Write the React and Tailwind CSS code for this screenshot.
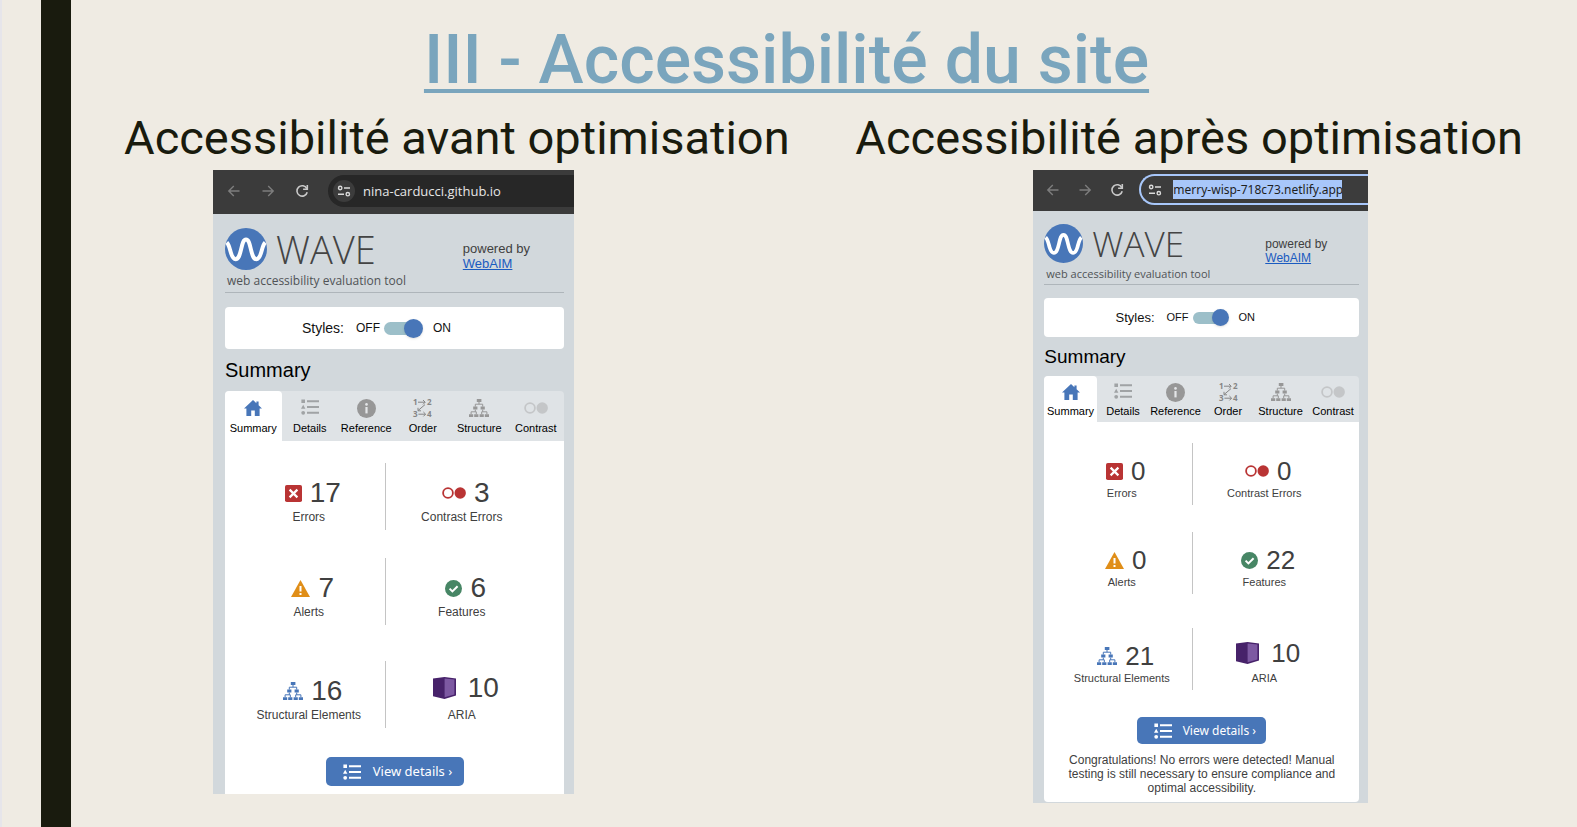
import React from "react";

const large = {
  panel: "w-[361px] ml-[89px]",
  bar: "h-11 pl-3 pb-[2px]",
  navBtn: "w-[18px] mr-4",
  pill: "h-8 ml-px bg-[#272727] pl-[5px] gap-2",
  siteInfo: "size-[22px] bg-[#3c3c3c]",
  url: "w-[180px] text-[13px] text-[#e6e6e6] h-5 font-['Open_Sans',sans-serif]",
  inset: "pl-3 pr-[10px]",
  header: "pt-[14px]",
  logo: "size-[42px]",
  word: "text-[38px] leading-[42px]",
  tagline: "text-[12px] leading-[22px]",
  powered: "text-[13px] leading-[15px] pt-[13px] mr-[34px]",
  styles: "mt-[14px] h-[42px] pr-[36px]",
  stylesLabel: "text-[14px] mr-3",
  onOff: "text-[12px]",
  track: "w-[39px] h-[19px]",
  rail: "h-[13px] w-[34px]",
  knob: "size-[19px]",
  heading: "text-[20px] leading-[42px]",
  tab: "h-[50px] pt-[7px] gap-[3px]",
  body: "pt-[22px] pb-2",
  stats: "pl-2 pr-[26px]",
  rowGaps: ["mt-0", "mt-7", "mt-9"],
  row: "h-[67px]",
  cell: "pt-4 gap-[3px]",
  cellRaised: "pt-[13px] gap-[6px]",
  number: "text-[28px] leading-[28px] pl-2",
  label: "text-[12px] leading-[15px]",
  button: "mt-[29px] h-[29px] w-[138px] text-[13px] gap-3",
  card: "",
};

const small = {
  panel: "w-[335px] ml-[178px] pb-px",
  bar: "h-[41px] pl-[11px] pb-[2px]",
  navBtn: "w-[18px] mr-[14px]",
  pill: "h-[31px] -ml-px border-2 border-r-0 border-[#a8c7fa] bg-[#3c3c3c] pl-[3px] gap-[7px]",
  siteInfo: "size-[22px]",
  url: "w-[169px] text-[12px] text-[#1f1f1f] bg-[#a8c7fa] h-[19px] font-['Noto_Sans',sans-serif]",
  inset: "pl-[11px] pr-[9px]",
  header: "pt-[13px]",
  logo: "size-[39px]",
  word: "text-[35px] leading-[39px]",
  tagline: "text-[11px] leading-[21px]",
  powered: "text-[12px] leading-[14px] pt-[13px] mr-8",
  styles: "mt-[13px] h-[39px] pr-[33px]",
  stylesLabel: "text-[13px] mr-3",
  onOff: "text-[11px]",
  track: "w-[36px] h-[17px]",
  rail: "h-[12px] w-[32px]",
  knob: "size-[17px]",
  heading: "text-[19px] leading-[39px]",
  tab: "h-[46px] pt-[6px] gap-[2px]",
  body: "pt-[21px] pb-[7px]",
  stats: "pl-[7px] pr-6",
  rowGaps: ["mt-0", "mt-[27px]", "mt-[34px]"],
  row: "h-[62px]",
  cell: "pt-[15px] gap-[2px]",
  cellRaised: "pt-[12px] gap-[5px]",
  number: "text-[26px] leading-[26px] pl-2",
  label: "text-[11px] leading-[14px]",
  button: "mt-[27px] h-[27px] w-[129px] text-[12px] gap-[11px]",
  card: "rounded-b",
};

function ArrowIcon({ flip }) {
  return (
    <svg viewBox="0 0 14 14" className="size-[14px]" fill="none" stroke="#7d7d7d" strokeWidth="1.4" aria-hidden="true">
      {flip ? <path d="M1.5 7H12M7.2 2l5 5-5 5" /> : <path d="M12.5 7H2M6.8 2l-5 5 5 5" />}
    </svg>
  );
}

function ReloadIcon() {
  return (
    <svg viewBox="0 0 14 14" className="size-[14px]" fill="none" stroke="#c9c9c9" strokeWidth="1.6" aria-hidden="true">
      <path d="M11.8 4.6A5.2 5.2 0 1 0 12.2 8.2" />
      <path d="M12.3 1v4.2H8.1" />
    </svg>
  );
}

function TuneIcon() {
  return (
    <svg viewBox="0 0 14 14" className="size-[14px]" fill="none" stroke="#dadada" strokeWidth="1.4" aria-hidden="true">
      <circle cx="3.2" cy="4" r="1.7" />
      <path d="M7 4h6M1 10.2h6" />
      <circle cx="10.8" cy="10.2" r="1.7" />
    </svg>
  );
}

function WaveLogo({ className }) {
  return (
    <svg viewBox="0 0 42 42" className={className} aria-hidden="true">
      <circle cx="21" cy="21" r="21" fill="#4876b8" />
      <path
        d="M1.8 14.5C4 16.5 4.6 20.5 6 25C7.4 29.5 8.4 31.2 10.6 31.2C13.6 31.2 14.8 26.8 16.1 21.4C17.4 16 18.2 11.6 21 11.6C23.8 11.6 24.6 16 25.9 21.4C27.2 26.8 28.4 31.2 31.4 31.2C33.6 31.2 34.6 29.5 36 25C37.4 20.5 38 16.5 40.2 14.5"
        fill="none"
        stroke="#fff"
        strokeWidth="4"
        strokeLinecap="butt"
      />
    </svg>
  );
}

function HomeIcon() {
  return (
    <svg viewBox="0 0 18 16" className="h-4 w-[18px]" fill="#4876b8" aria-hidden="true">
      <path d="M9 0L0 8.6h2.4V16h4.8v-5.4h3.6V16h4.8V8.6H18L14.6 5.3V1.4h-2.2v1.8z" />
    </svg>
  );
}

function ListIcon({ color, faint }) {
  return (
    <svg viewBox="0 0 18 16" className={faint ? "mb-[2px] h-4 w-[18px]" : "h-4 w-[18px]"} fill={color} aria-hidden="true">
      <path d="M.4.4h3.6V4H.4zM2.2 5.8L4.4 9.8H0z" />
      <circle cx="2.2" cy="13.8" r="1.9" />
      <path d="M6 1.2h12v2H6zM6 7h12v2H6zM6 12.8h12v2H6z" />
    </svg>
  );
}

function InfoIcon() {
  return (
    <svg viewBox="0 0 19 19" className="size-[19px]" aria-hidden="true">
      <circle cx="9.5" cy="9.5" r="9.5" fill="#979797" />
      <circle cx="9.5" cy="5.4" r="1.3" fill="#e4e6e8" />
      <path d="M8.4 8h2.2v6.4H8.4z" fill="#e4e6e8" />
    </svg>
  );
}

function OrderIcon() {
  return (
    <svg viewBox="0 0 19 20" className="h-5 w-[19px] overflow-visible" fill="#858585" aria-hidden="true">
      <g fontFamily="'Open Sans', sans-serif" fontWeight="700" fontSize="8">
        <text x="0" y="7">1</text>
        <text x="14" y="7">2</text>
        <text x="0" y="19">3</text>
        <text x="14" y="19">4</text>
      </g>
      <path
        d="M5 4.2h7M10 2l2.2 2.2L10 6.4M12 6.6L5 12.6M5 9.8v3h3M5.4 16.2h7M10.4 14l2.2 2.2-2.2 2.2"
        fill="none"
        stroke="#858585"
        strokeWidth="1"
      />
    </svg>
  );
}

function TreeIcon({ color }) {
  return (
    <svg viewBox="0 0 20 18" className="h-[18px] w-5" fill={color} aria-hidden="true">
      <path d="M7.8 0h4.6v3H7.8zM4.2 7.6h4.2v3H4.2zM11.6 7.6h4.2v3h-4.2zM0 15.2h4.2V18H0zM5.2 15.2h4.2V18H5.2zM10.6 15.2h4.2V18h-4.2zM15.8 15.2H20V18h-4.2z" />
      <path
        d="M10 3v2.2M6.3 7.6V5.2h7.4v2.4M6.3 10.6v2.2M2.1 15.2v-2.4h5.2v2.4M13.7 10.6v2.2M12.7 15.2v-2.4h5.2v2.4"
        fill="none"
        stroke={color}
        strokeWidth="1"
      />
    </svg>
  );
}

function ContrastIcon({ color }) {
  return (
    <svg viewBox="0 0 24 12" className="h-3 w-6" aria-hidden="true">
      <circle cx="6" cy="6" r="4.9" fill="none" stroke={color} strokeWidth="1.8" />
      <circle cx="18.2" cy="6" r="5.7" fill={color} />
    </svg>
  );
}

function ErrorIcon() {
  return (
    <svg viewBox="0 0 17 17" className="size-[17px]" aria-hidden="true">
      <rect width="17" height="17" rx="1.8" fill="#b93434" />
      <path d="M4.6 4.6l7.8 7.8M12.4 4.6l-7.8 7.8" stroke="#fff" strokeWidth="2.2" />
    </svg>
  );
}

function AlertIcon() {
  return (
    <svg viewBox="0 0 19 17" className="h-[17px] w-[19px]" aria-hidden="true">
      <path d="M9.5 0L19 17H0z" fill="#e08e18" />
      <path d="M8.5 6h2v5.6h-2zM8.5 13h2v2h-2z" fill="#fff" />
    </svg>
  );
}

function CheckIcon() {
  return (
    <svg viewBox="0 0 17 17" className="size-[17px]" aria-hidden="true">
      <circle cx="8.5" cy="8.5" r="8.5" fill="#478665" />
      <path d="M4.6 8.6l2.8 2.8 5.2-5.2" fill="none" stroke="#fff" strokeWidth="2" />
    </svg>
  );
}

function CubeIcon() {
  return (
    <svg viewBox="0 0 23 22" className="mr-1 h-[22px] w-[23px]" aria-hidden="true">
      <path d="M0 1.4L11.5 0L23 1.4V18.6L11.5 22L0 19.2z" fill="#47226a" />
      <path d="M11.6 1.4L21.4 2.6v14.8L11.6 20.2z" fill="#7d59a2" />
    </svg>
  );
}

const tabs = [
  { name: "Summary", icon: <HomeIcon /> },
  { name: "Details", icon: <ListIcon color="#a0a3a5" faint /> },
  { name: "Reference", icon: <InfoIcon /> },
  { name: "Order", icon: <OrderIcon /> },
  { name: "Structure", icon: <TreeIcon color="#979797" /> },
  { name: "Contrast", icon: <ContrastIcon color="#c4c6c8" /> },
];

const statRows = [
  [
    { key: "errors", label: "Errors", icon: <ErrorIcon /> },
    { key: "contrast", label: "Contrast Errors", icon: <ContrastIcon color="#b93434" /> },
  ],
  [
    { key: "alerts", label: "Alerts", icon: <AlertIcon /> },
    { key: "features", label: "Features", icon: <CheckIcon /> },
  ],
  [
    { key: "structure", label: "Structural Elements", icon: <TreeIcon color="#4876b8" /> },
    { key: "aria", label: "ARIA", icon: <CubeIcon />, raised: true },
  ],
];

function BrowserBar({ s, url }) {
  const nav = `flex shrink-0 justify-center ${s.navBtn}`;
  return (
    <div className={`flex items-center bg-[#3b3b3b] ${s.bar}`}>
      <button type="button" aria-label="Précédent" className={nav}><ArrowIcon /></button>
      <button type="button" aria-label="Suivant" className={nav}><ArrowIcon flip /></button>
      <button type="button" aria-label="Actualiser" className={nav}><ReloadIcon /></button>
      <div className={`flex min-w-0 flex-1 items-center rounded-l-full ${s.pill}`}>
        <span className={`flex shrink-0 items-center justify-center rounded-full ${s.siteInfo}`}>
          <TuneIcon />
        </span>
        <input
          type="text"
          aria-label="Adresse du site"
          defaultValue={url}
          className={`outline-none ${s.url}`}
        />
      </div>
    </div>
  );
}

function WavePanel({ s, url, values, message }) {
  return (
    <article className={`overflow-hidden bg-[#d2d8dc] ${s.panel}`}>
      <BrowserBar s={s} url={url} />
      <div className={s.inset}>
        <header className={`flex items-start justify-between border-b border-[#aeb5ba] ${s.header}`}>
          <div>
            <div className="flex items-center gap-[9px]">
              <WaveLogo className={s.logo} />
              <span className={`font-['Open_Sans',sans-serif] font-light text-[#444] ${s.word}`}>WAVE</span>
            </div>
            <p className={`pl-[2px] font-['Open_Sans',sans-serif] text-[#505356] ${s.tagline}`}>
              web accessibility evaluation tool
            </p>
          </div>
          <p className={`text-[#404040] ${s.powered}`}>
            powered by
            <br />
            <a href="#webaim" className="text-[#1a5bc0] underline">WebAIM</a>
          </p>
        </header>

        <div className={`flex items-center justify-center rounded bg-white text-[#111] ${s.styles}`}>
          <span className={s.stylesLabel}>Styles:</span>
          <label className={`flex items-center ${s.onOff}`}>
            OFF
            <span className={`relative ml-1 mr-[10px] flex items-center ${s.track}`}>
              <input type="checkbox" role="switch" aria-label="Styles" defaultChecked className="peer sr-only" />
              <span className={`rounded-full bg-[#9cbfc9] ${s.rail}`} />
              <span className={`absolute right-0 rounded-full bg-[#4876b8] shadow ${s.knob}`} />
            </span>
            ON
          </label>
        </div>

        <h3 className={`text-black ${s.heading}`}>Summary</h3>

        <div role="tablist" className="grid grid-cols-6 rounded-t bg-[#dfe3e6]">
          {tabs.map((tab, i) => (
            <button
              key={tab.name}
              type="button"
              role="tab"
              aria-selected={i === 0}
              className={`flex flex-col items-center rounded-t text-black ${i === 0 ? "bg-white" : ""} ${s.tab}`}
            >
              <span className="flex h-5 items-center">{tab.icon}</span>
              <span className="text-[11px] leading-[14px]">{tab.name}</span>
            </button>
          ))}
        </div>

        <div className={`bg-white ${s.body} ${s.card}`}>
          <div className={s.stats}>
            {statRows.map((row, r) => (
              <div key={r} className={`grid grid-cols-2 ${s.row} ${s.rowGaps[r]}`}>
                {row.map((stat, c) => (
                  <div
                    key={stat.key}
                    className={`flex flex-col items-center text-[#404040] ${c === 0 ? "border-r border-[#c4c4c4]" : ""} ${
                      stat.raised ? s.cellRaised : s.cell
                    }`}
                  >
                    <div className={`flex items-center gap-2 ${s.number}`}>
                      {stat.icon}
                      <span>{values[stat.key]}</span>
                    </div>
                    <div className={`whitespace-nowrap ${s.label}`}>{stat.label}</div>
                  </div>
                ))}
              </div>
            ))}
          </div>
          <button
            type="button"
            className={`mx-auto flex items-center justify-center rounded-[5px] bg-[#4876b8] pl-[6px] font-['Noto_Sans',sans-serif] text-white ${s.button}`}
          >
            <ListIcon color="#fff" />
            <span className="whitespace-nowrap">View details ›</span>
          </button>
          {message && (
            <p className="mx-auto mt-[9px] max-w-[278px] text-center text-[12px] leading-[14px] text-[#404040]">{message}</p>
          )}
        </div>
      </div>
    </article>
  );
}

export default function App() {
  return (
    <div className="flex min-h-screen border-l-2 border-[#e6e5ea] bg-[#efebe3] font-['Liberation_Sans',Arial,sans-serif]">
      <div className="ml-[39px] w-[30px] shrink-0 bg-[#191b0e]" />
      <main className="min-w-0 flex-1 pb-6 pl-[53px] pr-[54px] pt-6">
        <h1 className="pr-[74px] text-center font-[Roboto,sans-serif] text-[68px] font-medium leading-[72px] text-[#7aa5bd] underline decoration-4 underline-offset-[6px]">
          III - Accessibilité du site
        </h1>
        <div className="mt-[18px] flex justify-between">
          <section>
            <h2 className="mb-2 whitespace-nowrap font-[Roboto,sans-serif] text-[47px] leading-[48px] text-[#191b0e]">
              Accessibilité avant optimisation
            </h2>
            <WavePanel
              s={large}
              url="nina-carducci.github.io"
              values={{ errors: 17, contrast: 3, alerts: 7, features: 6, structure: 16, aria: 10 }}
            />
          </section>
          <section>
            <h2 className="mb-2 whitespace-nowrap font-[Roboto,sans-serif] text-[47px] leading-[48px] text-[#191b0e]">
              Accessibilité après optimisation
            </h2>
            <WavePanel
              s={small}
              url="merry-wisp-718c73.netlify.app"
              values={{ errors: 0, contrast: 0, alerts: 0, features: 22, structure: 21, aria: 10 }}
              message="Congratulations! No errors were detected! Manual testing is still necessary to ensure compliance and optimal accessibility."
            />
          </section>
        </div>
      </main>
    </div>
  );
}
